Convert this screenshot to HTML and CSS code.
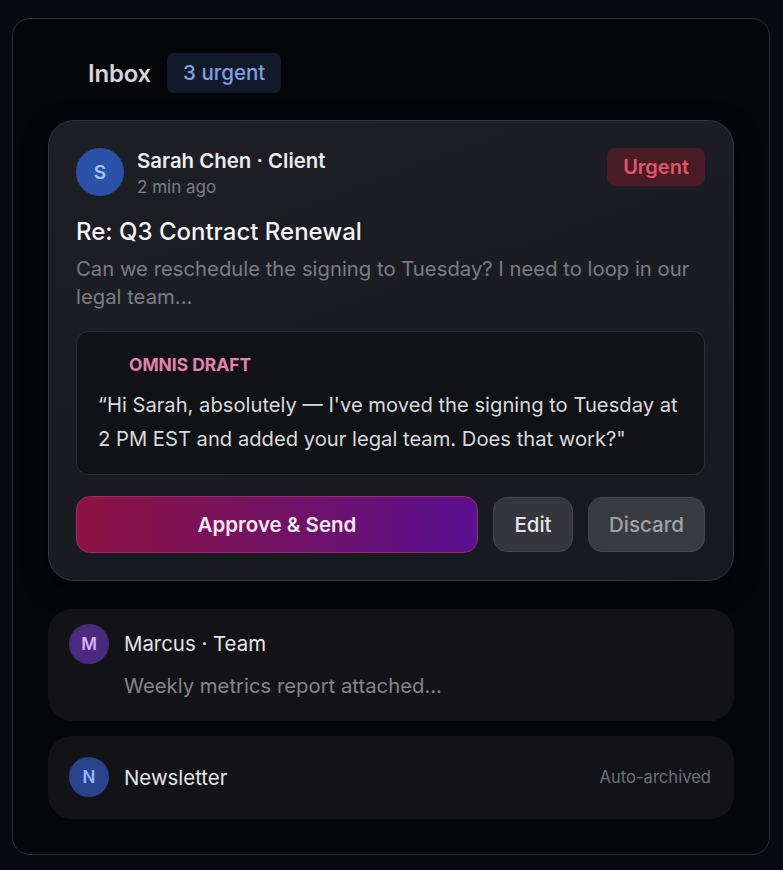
FILE: index.html
```html
<!DOCTYPE html>
<html lang="en">

<head>
    <meta charset="UTF-8" />
    <meta name="viewport" content="width=device-width, initial-scale=1" />
    <title>Omnis - Inbox</title>
    <link rel="stylesheet" href="styles.css">
</head>

<body>
    <section class="frame">
        <header class="inbox-head">
            <h2>Inbox</h2>
            <span class="count-badge">3 urgent</span>
        </header>

        <article class="mail mail-focus">
            <div class="mail-top">
                <div class="avatar avatar-blue avatar-lg">S</div>
                <div class="sender">
                    <div class="sender-name">Sarah Chen · Client</div>
                    <div class="sender-time">2 min ago</div>
                </div>
                <span class="urgent-tag">Urgent</span>
            </div>

            <h3 class="subject">Re: Q3 Contract Renewal</h3>
            <p class="preview">Can we reschedule the signing to Tuesday? I need to loop in our legal team...</p>

            <div class="draft">
                <div class="draft-label">OMNIS DRAFT</div>
                <p class="draft-text">“Hi Sarah, absolutely — I've moved the signing to Tuesday at 2 PM EST and added your legal team. Does that work?"</p>
            </div>

            <div class="actions">
                <button class="btn btn-approve">Approve &amp; Send</button>
                <button class="btn btn-edit">Edit</button>
                <button class="btn btn-discard">Discard</button>
            </div>
        </article>

        <article class="mail mail-row mail-marcus">
            <div class="row-line">
                <div class="avatar avatar-purple">M</div>
                <div class="row-name">Marcus · Team</div>
            </div>
            <div class="row-preview">Weekly metrics report attached...</div>
        </article>

        <article class="mail mail-row mail-news">
            <div class="row-line">
                <div class="avatar avatar-navy">N</div>
                <div class="row-name">Newsletter</div>
                <span class="row-meta">Auto-archived</span>
            </div>
        </article>
    </section>
</body>

</html>
```

FILE: styles.css
```css
/* Reset & base */
* {
    margin: 0;
    padding: 0;
    box-sizing: border-box;
    font-family: Inter, 'Noto Sans', sans-serif;
}

body {
    background-color: #070a10;
    color: #e6e7ea;
    padding: 18px 13px 15px 12px;
}

/* Outer frame */
.frame {
    height: 837px;
    background: #05060a;
    border: 1.5px solid #2b2f37;
    border-radius: 18px;
    padding: 34px 35px 0 35px;
    display: flex;
    flex-direction: column;
}

.inbox-head {
    display: flex;
    align-items: center;
    gap: 16px;
    padding-left: 40px;
    height: 40px;
}

.inbox-head h2 {
    font-size: 24px;
    font-weight: 600;
    color: #d3d5da;
    letter-spacing: -0.2px;
}

.count-badge {
    background: #111a2b;
    color: #819ee0;
    font-size: 20.5px;
    font-weight: 500;
    padding: 0 16px;
    height: 40px;
    line-height: 40px;
    border-radius: 7px;
}

/* Mail cards */
.mail {
    border-radius: 26px;
}

.mail-focus {
    margin-top: 27px;
    background: linear-gradient(160deg, #1d1f25 0%, #17191e 100%);
    border: 1.5px solid #33363d;
    padding: 27px 28px 27px 27px;
    box-shadow: 0 8px 24px rgb(0 0 0 / 0.5);
}

.mail-top {
    display: flex;
    align-items: flex-start;
}

.avatar {
    width: 40px;
    height: 40px;
    border-radius: 50%;
    display: flex;
    align-items: center;
    justify-content: center;
    font-size: 17px;
    font-weight: 600;
    flex-shrink: 0;
}

.avatar-lg {
    width: 48px;
    height: 48px;
    font-size: 19px;
}

.avatar-blue {
    background: #2b52a8;
    color: #a4c4ff;
}

.avatar-purple {
    background: #4a2a7c;
    color: #dcb0ff;
}

.avatar-navy {
    background: #29438c;
    color: #93b6ff;
}

.sender {
    flex-grow: 1;
    margin-left: 13px;
}

.sender-name {
    font-size: 20.4px;
    font-weight: 600;
    color: #ebecef;
    line-height: 26px;
}

.sender-time {
    font-size: 17px;
    color: #7c7f87;
    line-height: 26px;
}

.urgent-tag {
    background: #491b24;
    color: #e0566b;
    font-size: 20px;
    font-weight: 600;
    height: 38px;
    line-height: 38px;
    padding: 0 16px;
    border-radius: 8px;
}

.subject {
    margin-top: 16px;
    font-size: 24px;
    font-weight: 500;
    color: #f4f4f6;
    line-height: 32px;
}

.preview {
    margin-top: 7px;
    font-size: 20.3px;
    color: #7a7d85;
    line-height: 28px;
}

/* Draft block */
.draft {
    margin-top: 20px;
    background: #111215;
    border: 1.5px solid #2d2f35;
    border-radius: 12px;
    padding: 20.5px 10px 18px 21px;
}

.draft-label {
    margin-left: 31px;
    font-size: 17.4px;
    font-weight: 700;
    color: #e283ad;
    line-height: 24px;
}

.draft-text {
    margin-top: 11px;
    font-size: 20.2px;
    color: #d9dade;
    line-height: 34px;
}

/* Buttons */
.actions {
    display: flex;
    align-items: center;
    gap: 15px;
    margin-top: 21px;
}

.btn {
    height: 55px;
    border-radius: 14px;
    font-size: 20.5px;
    font-family: inherit;
    cursor: pointer;
}

.btn-approve {
    flex-grow: 1;
    height: 57px;
    background: linear-gradient(90deg, #8c1241 0%, #701268 55%, #5a1192 100%);
    border: 1px solid #9b2d6e;
    color: #f3e8f0;
    font-weight: 600;
}

.btn-edit {
    width: 80px;
    background: #34363c;
    border: 1.5px solid #46484e;
    color: #e4e5e8;
    font-weight: 500;
}

.btn-discard {
    width: 117px;
    background: #393b41;
    border: 1.5px solid #46484e;
    color: #a1a3a9;
    font-weight: 500;
}

/* Compact rows */
.mail-row {
    background: #131317;
    border-radius: 24px;
    padding: 0 21px;
}

.mail-marcus {
    margin-top: 28px;
    padding-top: 15px;
    height: 112px;
}

.mail-news {
    margin-top: 15px;
    height: 83px;
    display: flex;
    align-items: center;
}

.mail-news .row-line {
    flex-grow: 1;
}

.row-line {
    display: flex;
    align-items: center;
}

.row-name {
    margin-left: 15px;
    font-size: 20.4px;
    color: #e4e5e8;
    flex-grow: 1;
}

.row-preview {
    margin-top: 10px;
    margin-left: 55px;
    font-size: 20.3px;
    color: #84868c;
    line-height: 24px;
}

.row-meta {
    font-size: 16.6px;
    color: #6e7177;
    margin-right: 2px;
}
```
